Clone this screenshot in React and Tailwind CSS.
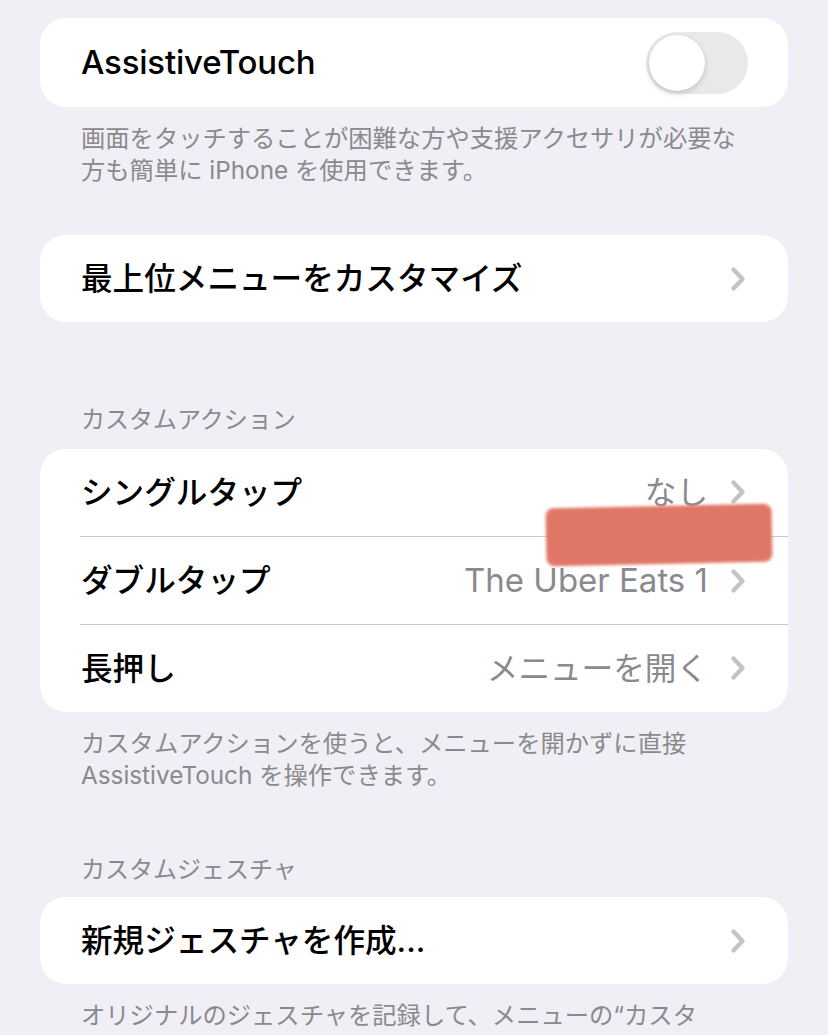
import React from "react";

function Chevron() {
  return (
    <svg width="16" height="26" viewBox="0 0 16 26" className="shrink-0">
      <path
        d="M3.5 3.5 L12.5 13 L3.5 22.5"
        fill="none"
        stroke="#c4c4c7"
        strokeWidth="4.4"
        strokeLinecap="round"
        strokeLinejoin="round"
      />
    </svg>
  );
}

function Toggle() {
  return (
    <div className="flex items-center w-[102px] h-[62px] rounded-full bg-[#e9e9eb] p-[3px]">
      <div className="w-[56px] h-[56px] rounded-full bg-white shadow-[0_3px_6px_rgba(0,0,0,0.15),0_0_1px_rgba(0,0,0,0.1)]" />
    </div>
  );
}

function Row({ label, value, latin }) {
  return (
    <div className="flex items-center justify-between h-[87px] pl-[41px] pr-[42px]">
      <span className="text-[31.6px] font-medium text-black">{label}</span>
      <div className="flex items-center gap-[22px]">
        {value && (
          <span className={latin ? "text-[33px] text-[#8a8a8e]" : "text-[31.6px] text-[#8a8a8e]"}>
            {value}
          </span>
        )}
        <Chevron />
      </div>
    </div>
  );
}

function Footer({ children }) {
  return (
    <p className="px-[41px] pt-[15px] text-[24.3px] leading-[32px] text-[#8a8a8e]">
      {children}
    </p>
  );
}

function Header({ children }) {
  return (
    <p className="px-[41px] text-[24px] leading-[32px] text-[#8a8a8e]">{children}</p>
  );
}

export default function App() {
  return (
    <div className="h-[1035px] overflow-hidden bg-[#f0eff5] px-[40px] pt-[18px] font-['Inter','Noto_Sans_CJK_JP',sans-serif]">
      <div className="flex items-center justify-between h-[89px] rounded-[26px] bg-white pl-[41px] pr-[40px]">
        <span className="text-[33px] font-medium tracking-[-0.2px] text-black">AssistiveTouch</span>
        <Toggle />
      </div>
      <Footer>
        画面をタッチすることが困難な方や支援アクセサリが必要な
        <br />
        方も簡単に iPhone を使用できます。
      </Footer>

      <div className="mt-[49px] rounded-[26px] bg-white">
        <Row label="最上位メニューをカスタマイズ" />
      </div>

      <div className="mt-[82px]">
        <Header>カスタムアクション</Header>
      </div>
      <div className="relative mt-[13px] rounded-[26px] bg-white">
        <Row label="シングルタップ" value="なし" />
        <div className="ml-[40px] h-px bg-[#c8c8cb]" />
        <Row label="ダブルタップ" value="The Uber Eats 1" latin />
        <div className="ml-[40px] h-px bg-[#c8c8cb]" />
        <Row label="長押し" value="メニューを開く" />
        <div className="absolute left-[506px] top-[57px] w-[226px] h-[58px] -rotate-[1.2deg] rounded-[8px] bg-[#e07766] blur-[1.5px]" />
      </div>
      <Footer>
        カスタムアクションを使うと、メニューを開かずに直接
        <br />
        AssistiveTouch を操作できます。
      </Footer>

      <div className="mt-[63px]">
        <Header>カスタムジェスチャ</Header>
      </div>
      <div className="mt-[11px] rounded-[26px] bg-white">
        <Row label="新規ジェスチャを作成..." />
      </div>
      <Footer>オリジナルのジェスチャを記録して、メニューの“カスタ</Footer>
    </div>
  );
}
